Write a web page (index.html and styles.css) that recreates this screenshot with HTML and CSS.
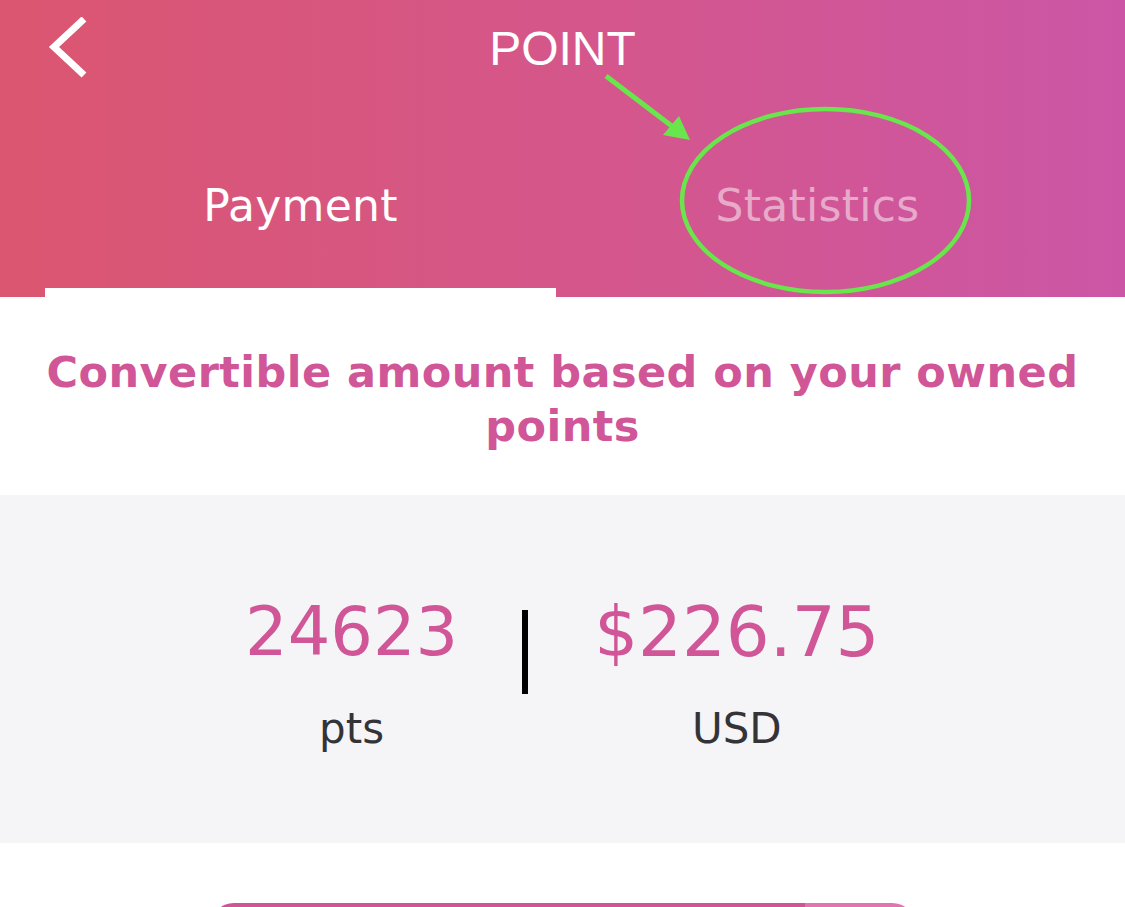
FILE: index.html
```html
<!DOCTYPE html>
<html lang="en">
<head>
<meta charset="utf-8">
<title>POINT</title>
<link rel="stylesheet" href="styles.css">
</head>
<body>
<div class="screen">
  <header class="header">
    <div class="topbar">
      <div class="back">
        <svg class="back-icon" width="42" height="62" viewBox="0 0 42 62">
          <polyline points="37,2 7,30 37,58" fill="none" stroke="#fff" stroke-width="7" stroke-linejoin="miter"/>
        </svg>
      </div>
      <h1 class="title">POINT</h1>
      <div class="spacer"></div>
    </div>
    <nav class="tabs">
      <div class="tab tab-active">
        <span class="tab-label">Payment</span>
        <span class="tab-indicator"></span>
      </div>
      <div class="tab">
        <span class="tab-label">Statistics</span>
        <span class="tab-indicator tab-indicator-off"></span>
      </div>
    </nav>
    <svg class="annotation" width="1125" height="297" viewBox="0 0 1125 297">
      <line x1="606" y1="76" x2="673" y2="127" stroke="#68e64b" stroke-width="5"/>
      <polygon points="690,140 663,135 679,116" fill="#68e64b"/>
      <ellipse cx="825.5" cy="200.5" rx="143.5" ry="91.5" fill="none" stroke="#68e64b" stroke-width="4.5"/>
    </svg>
  </header>

  <section class="headline">
    <p class="headline-text">Convertible amount based on your owned points</p>
  </section>

  <section class="stats">
    <div class="stat">
      <div class="stat-value">24623</div>
      <div class="stat-unit">pts</div>
    </div>
    <div class="divider"></div>
    <div class="stat">
      <div class="stat-value stat-value-money">$226.75</div>
      <div class="stat-unit">USD</div>
    </div>
  </section>

  <div class="action">
    <div class="action-bar">
      <div class="action-fill"></div>
      <div class="action-rest"></div>
    </div>
  </div>
</div>
</body>
</html>
```

FILE: styles.css
```css
html, body {
  margin: 0;
  padding: 0;
  overflow: hidden;
  background: #ffffff;
}

body {
  font-family: "DejaVu Sans", "Liberation Sans", sans-serif;
  width: 1125px;
  height: 907px;
}

.screen {
  width: 1125px;
}

.header {
  position: relative;
  height: 297px;
  background: linear-gradient(90deg, #db5670 0%, #d5568a 50%, #cc56a6 100%);
  color: #ffffff;
}

.topbar {
  display: grid;
  grid-template-columns: 1fr auto 1fr;
  align-items: start;
  padding-top: 19px;
  height: 60px;
}

.back {
  padding-left: 47px;
  margin-top: -2px;
}

.back-icon {
  display: block;
}

.title {
  margin: 0;
  font-family: "Liberation Sans", Arial, sans-serif;
  font-weight: normal;
  font-size: 48px;
  line-height: 60px;
  color: #ffffff;
}

.tabs {
  display: grid;
  grid-template-columns: 511px 511px;
  column-gap: 6px;
  padding-left: 45px;
  height: 218px;
}

.tab {
  display: flex;
  flex-direction: column;
  justify-content: flex-end;
  align-items: stretch;
}

.tab-label {
  display: block;
  text-align: center;
  font-size: 44px;
  line-height: 51px;
  letter-spacing: 0.3px;
  color: rgba(255, 255, 255, 0.5);
}

.tab-active .tab-label {
  color: #ffffff;
}

.tab-indicator {
  display: block;
  height: 9px;
  margin-top: 57px;
  background: #ffffff;
}

.tab-indicator-off {
  background: transparent;
}

.annotation {
  position: absolute;
  left: 0;
  top: 0;
  pointer-events: none;
}

.headline {
  padding: 48px 30px 42px;
  background: #ffffff;
}

.headline-text {
  margin: 0;
  text-align: center;
  font-weight: bold;
  font-size: 43px;
  line-height: 54px;
  letter-spacing: 0.45px;
  color: #d05698;
}

.stats {
  display: flex;
  justify-content: flex-start;
  align-items: flex-start;
  height: 348px;
  box-sizing: border-box;
  padding: 99px 0 0 245px;
  background: #f5f5f7;
}

.stat {
  display: flex;
  flex-direction: column;
  align-items: center;
}

.stat-value {
  font-size: 67px;
  line-height: 76px;
  color: #d05698;
}

.stat-value-money {
  font-size: 69px;
}

.stat-unit {
  margin-top: 35px;
  font-size: 42px;
  line-height: 48px;
  color: #343438;
}

.divider {
  width: 6px;
  height: 84px;
  margin: 16px 66px 0 64px;
  background: #000000;
}

.action {
  display: flex;
  justify-content: center;
  padding-top: 60px;
}

.action-bar {
  display: flex;
  width: 706px;
  height: 100px;
  border-radius: 24px;
  overflow: hidden;
}

.action-fill {
  flex: 0 0 595px;
  background: #cf5597;
}

.action-rest {
  flex: 1;
  background: #e274b4;
}
```
